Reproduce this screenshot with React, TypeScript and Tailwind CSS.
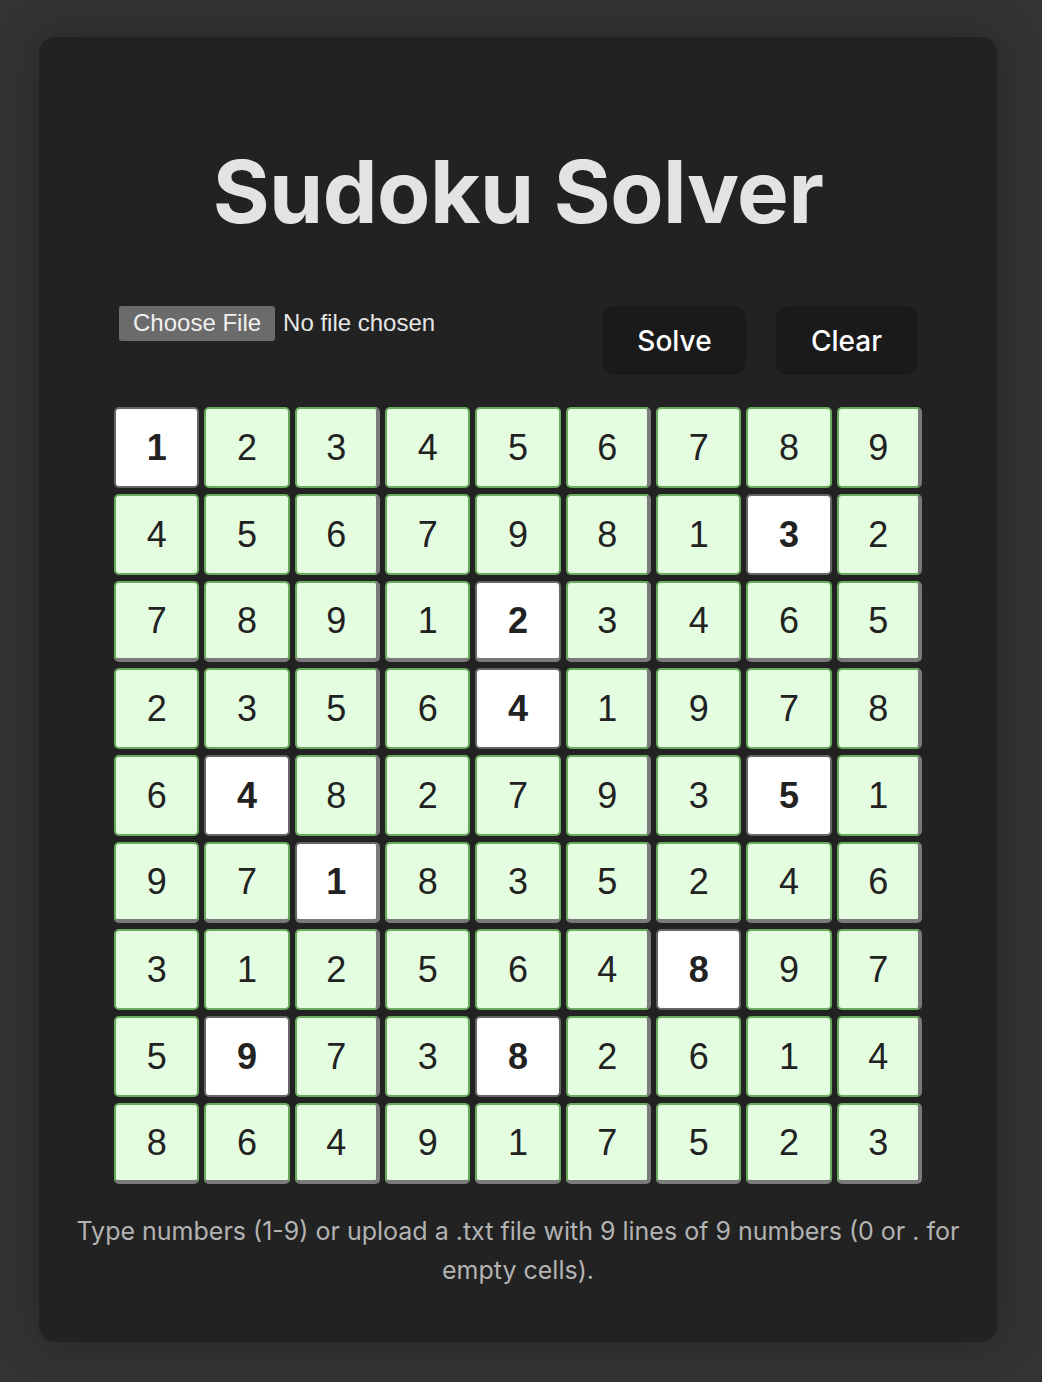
const board: number[][] = [
  [1, 2, 3, 4, 5, 6, 7, 8, 9],
  [4, 5, 6, 7, 9, 8, 1, 3, 2],
  [7, 8, 9, 1, 2, 3, 4, 6, 5],
  [2, 3, 5, 6, 4, 1, 9, 7, 8],
  [6, 4, 8, 2, 7, 9, 3, 5, 1],
  [9, 7, 1, 8, 3, 5, 2, 4, 6],
  [3, 1, 2, 5, 6, 4, 8, 9, 7],
  [5, 9, 7, 3, 8, 2, 6, 1, 4],
  [8, 6, 4, 9, 1, 7, 5, 2, 3],
];

// cells the user typed in (row, col)
const givens = new Set(["0-0", "1-7", "2-4", "3-4", "4-1", "4-7", "5-2", "6-6", "7-1", "7-4"]);

const Cell: React.FC<{ value: number; r: number; c: number }> = ({ value, r, c }) => {
  const given = givens.has(`${r}-${c}`);
  const boxRight = c % 3 === 2;
  const boxBottom = r % 3 === 2;

  return (
    <div
      className={[
        "flex items-center justify-center h-[81px] rounded-[5px] border-2 text-[36px] text-[#222] font-['Liberation_Sans',Arial,sans-serif]",
        given ? "bg-white border-[#666] font-bold" : "bg-[#e4fde1] border-[#6aaa5e]",
        boxRight ? "border-r-4 border-r-[#7a7a7a]" : "",
        boxBottom ? "border-b-4 border-b-[#7a7a7a]" : "",
      ].join(" ")}
    >
      {value}
    </div>
  );
};

export default function App() {
  return (
    <div className="min-h-[1382px] bg-[#333333] pt-[37px] pb-[40px] font-['Inter',sans-serif]">
      <div className="ml-[39px] w-[958px] h-[1305px] rounded-[16px] bg-[#222222] shadow-[0_0_40px_rgba(0,0,0,0.25)] pt-[111px] px-[32px]">
        {/* Titulo */}
        <h1 className="text-center text-[87px] leading-none font-bold text-[#e3e3e3] tracking-[-0.5px]">
          Sudoku Solver
        </h1>

        {/* Controles */}
        <div className="mt-[72px] px-[48px] flex justify-between items-start">
          <div className="mt-[-2px] flex items-center gap-[8px] font-['Liberation_Sans',Arial,sans-serif] text-[24px]">
            <span className="h-[35px] px-[14px] flex items-center rounded-[3px] bg-[#6b6b6b] text-[#f0f0f0]">
              Choose File
            </span>
            <span className="text-[#e6e6e6]">No file chosen</span>
          </div>

          <div className="flex gap-[30px] mt-[-1px]">
            <button className="w-[143px] h-[69px] rounded-[12px] bg-[#1a1a1a] text-white text-[28px] font-medium">
              Solve
            </button>
            <button className="w-[141px] h-[69px] rounded-[12px] bg-[#1a1a1a] text-white text-[28px] font-medium">
              Clear
            </button>
          </div>
        </div>

        {/* Tablero */}
        <div className="mt-[32px] mx-auto w-[808px] grid grid-cols-9 gap-x-[5px] gap-y-[6px]">
          {board.map((row, r) =>
            row.map((v, c) => <Cell key={`${r}-${c}`} value={v} r={r} c={c} />)
          )}
        </div>

        {/* Ayuda */}
        <p className="mt-[28px] text-center text-[25px] leading-[39px] text-[#b3b3b3]">
          Type numbers (1-9) or upload a .txt file with 9 lines of 9 numbers (0 or . for empty cells).
        </p>
      </div>
    </div>
  );
}
